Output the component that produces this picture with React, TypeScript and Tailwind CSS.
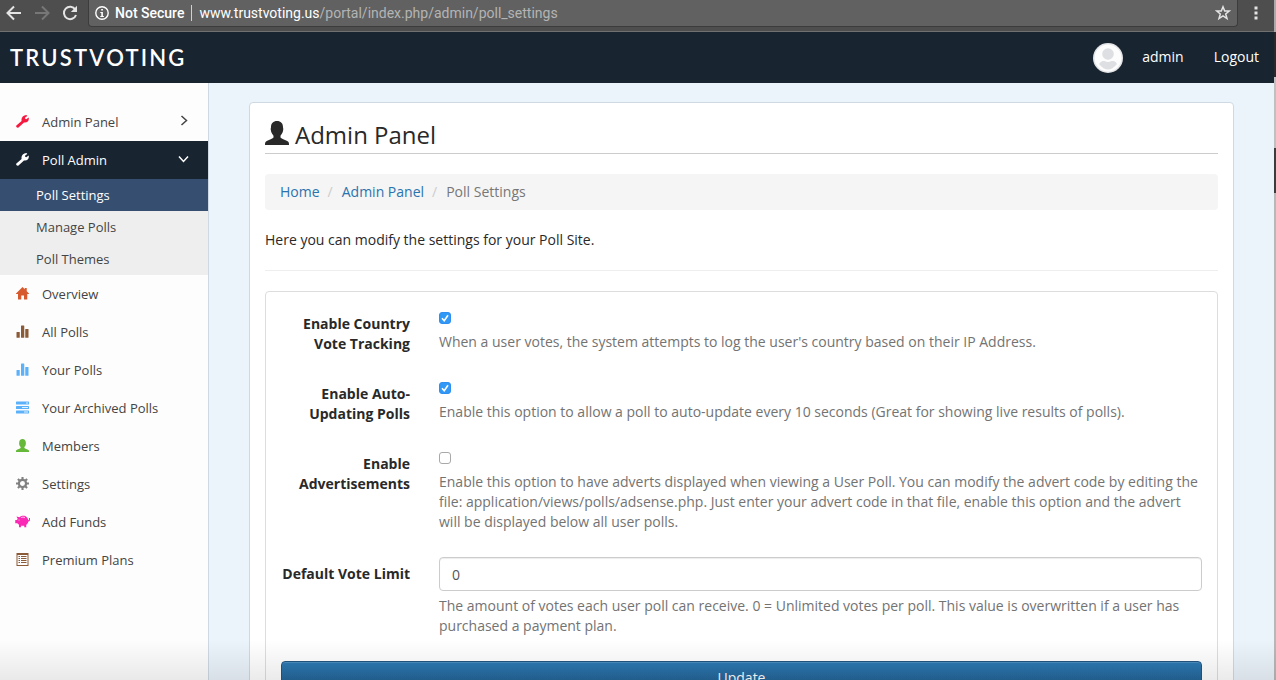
import type { ReactNode } from 'react';

type IconProps = { className?: string };

function Glyph({ className = '', children, box = '0 0 1200 1200' }: IconProps & { children: ReactNode; box?: string }) {
  return (
    <svg viewBox={box} fill="currentColor" aria-hidden="true" className={`shrink-0 ${className}`}>
      {children}
    </svg>
  );
}

const Wrench = (p: IconProps) => (
  <Glyph {...p} box="0 0 26 26">
    <path d="M.8 21.200 11.200 11.800C9.800 6 14 .6 20.800 .2L22.800 2 18.600 4.600 18.200 7.400 20.400 8.600 25.400 5.200C27 11.600 22 16.400 16 15L5 25.200C2.200 26.800-1 23.600 .8 21.200Z" />
  </Glyph>
);

const Home = (p: IconProps) => (
  <Glyph {...p} box="0 0 26 26">
    <path d="M13 0 17.500 4.500V2H21.500V8.500L26 13V14H22.500V25H16V17H10.500V25H4V14H0V13L13 0Z" />
  </Glyph>
);

const Stats = (p: IconProps) => (
  <Glyph {...p} box="0 0 26 26">
    <rect x="1" y="14" width="6.500" height="11.500" rx="1" />
    <rect x="10" y="1" width="6.500" height="24.500" rx="1" />
    <rect x="18.500" y="8" width="6.500" height="17.500" rx="1" />
  </Glyph>
);

const Tasks = (p: IconProps) => (
  <Glyph {...p} box="0 0 26 26">
    <rect y="1" width="26" height="6" rx="1" />
    <rect y="10" width="26" height="6" rx="1" />
    <rect y="19" width="26" height="6" rx="1" />
    <path fill="#e0f1fe" d="M20 3h4v2h-4zM12 12h12v2H12zM16 21h8v2h-8z" />
  </Glyph>
);

const Person = (p: IconProps) => (
  <Glyph {...p} box="0 0 24 24">
    <path d="M12 0C15.800 0 18 2.500 18 6C18 7 18.500 7.500 18.200 9C17.900 12 16.200 13.500 15.500 14.700V16.500C16.500 17.700 21 19 23 20.500C24 21.300 24 22.500 24 24H0C0 22.500 0 21.300 1 20.500C3 19 7.500 17.700 8.500 16.500V14.700C7.800 13.500 6.100 12 5.800 9C5.500 7.500 6 7 6 6C6 2.500 8.200 0 12 0Z" />
  </Glyph>
);

const Cog = (p: IconProps) => (
  <Glyph {...p} box="0 0 26 26">
    <circle cx="13" cy="13" r="7.200" fill="none" stroke="currentColor" strokeWidth="4.500" />
    <path
      fill="none"
      stroke="currentColor"
      strokeWidth="4.200"
      d="M13 0v5M13 21v5M0 13h5M21 13h5M3.800 3.800l3.700 3.700M18.500 18.500l3.700 3.700M22.200 3.800l-3.700 3.700M7.500 18.500l-3.700 3.700"
    />
  </Glyph>
);

const Piggy = ({ className = '' }: IconProps) => (
  <Glyph className={`-mx-px w-[15px] ${className}`} box="0 0 30 24">
    <path d="M3 2 9 3.500C13 0 20 0 22.500 2.500C25 4.500 26.500 7 26.500 9.500L28 8.500V5H30V10L26.500 12.500C26 15 24.500 17 22.500 18.500V23.500H18.500V20.500H12V23.500H8V18.500L4.500 15.500H.500V9H3.500L5.500 7 3 2Z" />
    <path d="M12 4q4-1.600 8 0" fill="none" stroke="#fff" strokeWidth="1.400" />
    <circle cx="8" cy="9" r="1" fill="#fff" />
  </Glyph>
);

const Listing = (p: IconProps) => (
  <Glyph {...p} box="0 0 26 26">
    <path fillRule="evenodd" d="M1 0H25V26H1ZM3 4V24H23V4Z" />
    <path d="M5 6h3v2H5zM10 6h11v2H10zM5 10h3v2H5zM10 10h11v2H10zM5 14h3v2H5zM10 14h11v2H10zM5 18h3v2H5zM10 18h11v2H10z" />
  </Glyph>
);

function Stroke({ className = '', d, width = 2 }: IconProps & { d: string; width?: number }) {
  return (
    <svg
      viewBox="0 0 16 16"
      fill="none"
      stroke="currentColor"
      strokeWidth={width}
      aria-hidden="true"
      className={`size-4 shrink-0 ${className}`}
    >
      <path d={d} />
    </svg>
  );
}

function BrowserBar() {
  return (
    <div className="flex h-8 items-start border-b border-[#707070] bg-[#4e4e4e] pl-1.5 font-['Roboto',sans-serif] text-sm">
      <div className="flex h-[26px] items-center gap-3 text-[#e4e4e4]">
        <button aria-label="Back">
          <Stroke d="M15 8H2M8 1.500 1.500 8 8 14.500" />
        </button>
        <button aria-label="Forward" className="text-[#777]">
          <Stroke d="M1 8H14M8 1.500 14.500 8 8 14.500" />
        </button>
        <button aria-label="Reload">
          <svg viewBox="0 0 16 16" className="size-4" aria-hidden="true">
            <path d="M13.300 4.500A6.200 6.200 0 1 0 14 10" fill="none" stroke="currentColor" strokeWidth="2" />
            <path d="M15 .8V7H8.800Z" fill="currentColor" />
          </svg>
        </button>
      </div>
      <div className="ml-2.5 flex h-[27px] min-w-0 flex-1 items-center rounded-b border border-t-0 border-[#3c3c3c] bg-[#616161] pr-1.5 pl-1.5 text-white">
        <svg viewBox="0 0 14 14" className="size-3.5" aria-hidden="true">
          <circle cx="7" cy="7" r="6.200" fill="none" stroke="currentColor" strokeWidth="1.400" />
          <path d="M6.200 3h1.700v1.600H6.200zM5.300 6h2.600v4h1v1H5.300v-1h1V7h-1z" fill="currentColor" />
        </svg>
        <span className="ml-1.5 font-medium">Not Secure</span>
        <span className="mx-[7px] h-4 w-px bg-[#d0d0d0]" />
        <span className="flex-1 truncate">
          www.trustvoting.us<span className="text-[#b4b4b4]">/portal/index.php/admin/poll_settings</span>
        </span>
        <button aria-label="Bookmark" className="text-[#e4e4e4]">
          <Stroke
            width={1.5}
            d="M8 1.800 9.700 6H14.300L10.700 8.900 12 13.600 8 10.900 4 13.600 5.300 8.900 1.700 6H6.300Z"
          />
        </button>
      </div>
      <button aria-label="Menu" className="flex h-[26px] w-9 items-center justify-center text-[#e4e4e4]">
        <svg viewBox="0 0 4 14" className="h-3.5 w-1" fill="currentColor" aria-hidden="true">
          <path d="M.5.500h3v3h-3zM.5 5.500h3v3h-3zM.5 10.500h3v3h-3z" />
        </svg>
      </button>
    </div>
  );
}

function Header() {
  return (
    <header className="flex h-[51px] items-center bg-[#192431] pr-[15px] pl-2.5 text-white">
      <a href="#" className="font-['Lato',sans-serif] text-[22px] font-semibold tracking-widest">
        TRUSTVOTING
      </a>
      <nav className="ml-auto flex items-center pb-0.5 text-sm font-medium">
        <svg viewBox="0 0 30 30" className="mt-0.5 mr-[19px] size-[30px]" aria-hidden="true">
          <circle cx="15" cy="15" r="15" fill="#e3e4e6" />
          <circle cx="15" cy="15" r="13.500" fill="#fdfdfd" />
          <circle cx="15" cy="11" r="5.800" fill="#dddfe3" />
          <path d="M6 21C8 17.500 11 18 11.500 18Q15 20 18.500 18C21 18 23 18.500 24 21Q15 32 6 21Z" fill="#dddfe3" />
        </svg>
        <a href="#" className="mr-[30px]">admin</a>
        <a href="#">Logout</a>
      </nav>
    </header>
  );
}

const links = [
  { label: 'Overview', Icon: Home, color: 'text-[#d75a2d]' },
  { label: 'All Polls', Icon: Stats, color: 'text-[#8b5a36]' },
  { label: 'Your Polls', Icon: Stats, color: 'text-[#5cb2fa]' },
  { label: 'Your Archived Polls', Icon: Tasks, color: 'text-[#5cb2fa]' },
  { label: 'Members', Icon: Person, color: 'text-[#65b83a]' },
  { label: 'Settings', Icon: Cog, color: 'text-[#808080]' },
  { label: 'Add Funds', Icon: Piggy, color: 'text-[#fa28b4]' },
  { label: 'Premium Plans', Icon: Listing, color: 'text-[#8b5a36]' },
];

function MenuLink({ children, icon, className = '' }: { children: ReactNode; icon: ReactNode; className?: string }) {
  return (
    <a href="#" className={`flex h-[38px] items-center pr-4 pl-4 ${className}`}>
      <span className="mr-[13px] mb-0.5 flex">{icon}</span>
      {children}
    </a>
  );
}

function Sidebar() {
  return (
    <aside className="w-[209px] shrink-0 border-r border-[#cfd9e3] bg-[#fdfdfd] pt-5 text-[13px] text-[#444]">
      <nav>
        <MenuLink icon={<Wrench className="size-[13px] text-[#f5183f]" />}>
          Admin Panel
          <Stroke className="mb-0.5 ml-auto" width={1.5} d="M5.500 3 10.500 7.500 5.500 12" />
        </MenuLink>
        <MenuLink icon={<Wrench className="size-[13px]" />} className="bg-[#192431] font-medium text-white">
          Poll Admin
          <Stroke className="mb-0.5 ml-auto" width={1.5} d="M3 5.500 7.500 10.500 12 5.500" />
        </MenuLink>
        <div className="bg-[#eee]">
          <a href="#" className="flex h-8 items-center bg-[#364e6f] pl-9 font-medium text-white">Poll Settings</a>
          <a href="#" className="flex h-8 items-center pl-9">Manage Polls</a>
          <a href="#" className="flex h-8 items-center pl-9">Poll Themes</a>
        </div>
        {links.map(({ label, Icon, color }) => (
          <MenuLink key={label} icon={<Icon className={`h-[13px] min-w-[13px] ${color}`} />}>
            {label}
          </MenuLink>
        ))}
      </nav>
    </aside>
  );
}

function Field({ id, label, children, help }: { id: string; label: string; children: ReactNode; help: string }) {
  return (
    <div className="-mx-[15px] mb-[15px] grid grid-cols-[158px_1fr]">
      <label htmlFor={id} className="pt-[7px] pr-3.5 pl-3 text-right font-bold">
        {label}
      </label>
      <div className="px-[15px]">
        {children}
        <p className="mt-[5px] mb-2.5 text-[#737373]">{help}</p>
      </div>
    </div>
  );
}

function Check({ id, checked }: { id: string; checked?: boolean }) {
  return (
    <div className="flex h-5 pt-[5px]">
      <input
        id={id}
        type="checkbox"
        defaultChecked={checked}
        className="peer size-3 appearance-none rounded-[3px] border border-[#a9a9a9] bg-white checked:border-[#2f8ff0] checked:bg-[#3198f6]"
      />
      <svg viewBox="0 0 12 12" className="pointer-events-none -ml-3 hidden size-3 peer-checked:block" aria-hidden="true">
        <path d="M3 6.300 5.200 8.700 9 3.200" fill="none" stroke="#fff" strokeWidth="1.600" />
      </svg>
    </div>
  );
}

function PollForm() {
  return (
    <form className="rounded border border-[#ddd] p-[15px]" onSubmit={(e) => e.preventDefault()}>
      <Field
        id="tracking"
        label="Enable Country Vote Tracking"
        help="When a user votes, the system attempts to log the user's country based on their IP Address."
      >
        <Check id="tracking" checked />
      </Field>
      <Field
        id="updating"
        label="Enable Auto-Updating Polls"
        help="Enable this option to allow a poll to auto-update every 10 seconds (Great for showing live results of polls)."
      >
        <Check id="updating" checked />
      </Field>
      <Field
        id="adverts"
        label="Enable Advertisements"
        help="Enable this option to have adverts displayed when viewing a User Poll. You can modify the advert code by editing the file: application/views/polls/adsense.php. Just enter your advert code in that file, enable this option and the advert will be displayed below all user polls."
      >
        <Check id="adverts" />
      </Field>
      <Field
        id="limit"
        label="Default Vote Limit"
        help="The amount of votes each user poll can receive. 0 = Unlimited votes per poll. This value is overwritten if a user has purchased a payment plan."
      >
        <input
          id="limit"
          type="text"
          defaultValue="0"
          className="block h-[34px] w-full rounded border border-[#ccc] bg-white px-3 text-[#555] shadow-[inset_0_1px_1px_rgba(0,0,0,0.075)]"
        />
      </Field>
      <button
        type="submit"
        className="block h-[34px] w-full rounded border border-[#245580] bg-linear-to-b from-[#2d7ab4] to-[#1f5582] font-medium text-white shadow-[inset_0_1px_0_rgba(255,255,255,0.15)]"
      >
        Update
      </button>
    </form>
  );
}

export default function App() {
  return (
    <div className="relative flex h-screen overflow-hidden bg-[#ebf3fb] font-['Open_Sans',sans-serif] text-sm leading-5 text-[#292929]">
      <div className="flex min-w-0 flex-1 flex-col">
        <BrowserBar />
        <Header />
        <div className="flex min-h-0 flex-1">
          <Sidebar />
          <main className="min-w-0 flex-1 overflow-hidden px-10 pt-[19px]">
            <section className="rounded border border-[#cfd9e3] bg-white p-[15px]">
              <h1 className="flex h-9 items-end gap-1.5 border-b border-[#ccc] text-2xl leading-9">
                <Person className="mb-2 size-6" />
                Admin Panel
              </h1>
              <nav aria-label="Breadcrumb" className="mt-5 flex rounded bg-[#f5f5f5] px-[15px] py-2">
                <a href="#" className="text-[#2b73ae]">Home</a>
                <span className="pr-[9px] pl-2 text-[#ccc]">/</span>
                <a href="#" className="text-[#2b73ae]">Admin Panel</a>
                <span className="pr-[9px] pl-2 text-[#ccc]">/</span>
                <span className="text-[#777]">Poll Settings</span>
              </nav>
              <p className="mt-5">Here you can modify the settings for your Poll Site.</p>
              <hr className="my-5 border-[#eee]" />
              <PollForm />
            </section>
          </main>
        </div>
      </div>
      <div className="flex w-0.5 shrink-0 flex-col" aria-hidden="true">
        <span className="h-8 bg-[#aaa]" />
        <span className="h-[45px] bg-[#2a2a2a]" />
        <span className="h-[71px] bg-[#c0c0c0]" />
        <span className="h-[45px] bg-[#3c3c3c]" />
        <span className="flex-1 bg-[#b8b8b8]" />
      </div>
      <div className="pointer-events-none absolute inset-x-0 bottom-0 h-10 bg-linear-to-b from-transparent to-black/8" />
    </div>
  );
}
